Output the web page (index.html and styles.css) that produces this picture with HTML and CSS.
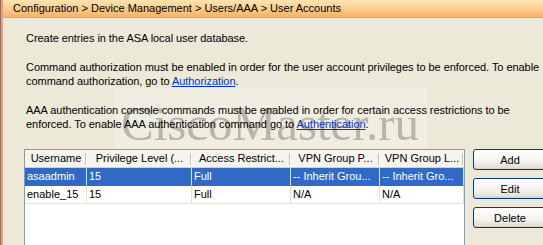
FILE: index.html
```html
<!DOCTYPE html>
<html>
<head>
<meta charset="utf-8">
<link rel="stylesheet" href="styles.css">
</head>
<body>
<div class="app">
  <div class="inner">
    <div class="crumb">Configuration &gt; Device Management &gt; Users/AAA &gt; User Accounts</div>
    <div class="watermark"><span class="wm-text">CiscoMaster.ru</span></div>
    <div class="content">
      <p class="para">Create entries in the ASA local user database.</p>
      <p class="para">Command authorization must be enabled in order for the user account privileges to be enforced. To enable<br>command authorization, go to <a href="#">Authorization</a>.</p>
      <p class="para">AAA authentication console commands must be enabled in order for certain access restrictions to be<br>enforced. To enable AAA authentication command go to <a href="#">Authentication</a>.</p>
      <div class="main">
        <div class="table">
          <div class="row head">
            <div class="cell">Username</div>
            <div class="cell">Privilege Level (...</div>
            <div class="cell">Access Restrict...</div>
            <div class="cell">VPN Group P...</div>
            <div class="cell">VPN Group L...</div>
          </div>
          <div class="row sel">
            <div class="cell">asaadmin</div>
            <div class="cell">15</div>
            <div class="cell">Full</div>
            <div class="cell">-- Inherit Grou...</div>
            <div class="cell">-- Inherit Gro...</div>
          </div>
          <div class="row">
            <div class="cell">enable_15</div>
            <div class="cell">15</div>
            <div class="cell">Full</div>
            <div class="cell">N/A</div>
            <div class="cell">N/A</div>
          </div>
          <div class="fill"></div>
        </div>
        <div class="buttons">
          <button class="btn">Add</button>
          <button class="btn">Edit</button>
          <button class="btn">Delete</button>
        </div>
      </div>
    </div>
  </div>
</div>
</body>
</html>
```

FILE: styles.css
```css
html, body {
  margin: 0;
  padding: 0;
  height: 100%;
  overflow: hidden;
}
body {
  background: #ece9d8;
  font-family: "Liberation Sans", Arial, sans-serif;
  font-size: 11px;
  color: #000;
}
.app {
  height: 100%;
  border-left: 1px solid #9c6a5a;
}
.inner {
  position: relative;
  height: 100%;
  border-left: 2px solid #dca28c;
}
.crumb {
  height: 17px;
  line-height: 16px;
  padding-left: 10px;
  font-size: 11px;
  background: linear-gradient(#fee4b0, #fcc98a 60%, #fab062);
  border-bottom: 1px solid #f2a24e;
  white-space: nowrap;
}
.content {
  position: relative;
  z-index: 1;
  padding: 13px 0 0 23px;
}
.para {
  margin: 0 0 15px 0;
  line-height: 14px;
  letter-spacing: -0.05px;
  white-space: nowrap;
}
.para a {
  color: #0033cc;
  text-decoration: underline;
}
.main {
  display: flex;
  align-items: flex-start;
  margin-top: 18px;
  margin-left: -2px;
}
.table {
  width: 439px;
  height: 120px;
  border: 1px solid #7f9db9;
  background: #fff;
  display: flex;
  flex-direction: column;
}
.row {
  display: grid;
  grid-template-columns: 62px 105px 99px 89px 84px;
  height: 18px;
  line-height: 17px;
}
.row .cell {
  border-right: 1px solid #e3e2da;
  border-bottom: 1px solid #e3e2da;
  padding-left: 2px;
  white-space: nowrap;
  overflow: hidden;
}
.row.head {
  background: #f5f4ef;
  height: 18px;
}
.row.head .cell {
  text-align: center;
  padding: 0;
  border-right: 0;
  border-bottom: 1px solid #d3d0c5;
  background-image: linear-gradient(#c5c2b2, #c5c2b2), linear-gradient(#fff, #fff);
  background-size: 1px 12px, 1px 12px;
  background-position: right 1px center, right 0 center;
  background-repeat: no-repeat;
}
.row.sel {
  background: #316ac5;
  color: #fff;
}
.row.sel .cell {
  border-right-color: #d6dff0;
  border-bottom-color: #316ac5;
}
.fill {
  flex: 1;
}
.buttons {
  display: flex;
  flex-direction: column;
  gap: 8px;
  margin-left: 8px;
}
.btn {
  width: 74px;
  height: 21px;
  padding: 0;
  font-family: "Liberation Sans", Arial, sans-serif;
  font-size: 11px;
  color: #000;
  border: 1px solid #003c74;
  border-radius: 3px;
  background: linear-gradient(#ffffff, #f4f3ee 60%, #dcdad0);
  box-shadow: inset 0 -1px 0 #d6d0c5;
}
.watermark {
  position: absolute;
  left: 112px;
  top: 88px;
  width: 312px;
  height: 61px;
  background: rgba(255, 255, 255, 0.22);
  overflow: hidden;
  z-index: 0;
  pointer-events: none;
}
.wm-text {
  display: block;
  margin-top: 6px;
  margin-left: 6px;
  font-family: "Liberation Serif", "Times New Roman", serif;
  font-size: 49px;
  line-height: 60px;
  color: rgba(120, 114, 98, 0.45);
  white-space: nowrap;
}
```
